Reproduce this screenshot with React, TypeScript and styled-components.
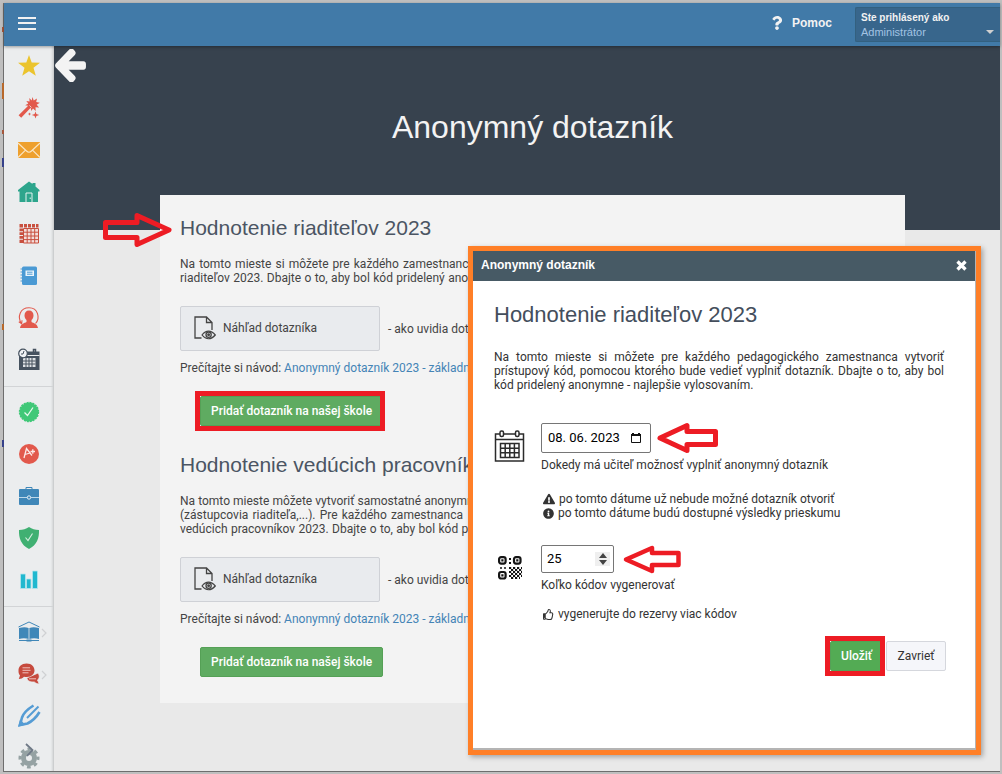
import React from 'react';
import styled, { createGlobalStyle, css } from 'styled-components';
import { FaExclamationTriangle, FaInfoCircle, FaQuestion, FaRegThumbsUp } from 'react-icons/fa';

const GlobalStyle = createGlobalStyle`
  * { box-sizing: border-box; }
  body {
    margin: 0;
    background: #bfbfbf;
    color: #444;
    font: 12px/14px Roboto, sans-serif;
  }
  h1, h2, p { margin: 0; font-weight: 400; }
  button, input { font-family: inherit; }
`;

const Frame = styled.div`
  position: relative;
  min-height: 100vh;
  display: flex;
  padding: 3px 2px 2px 3px;
  overflow: hidden;
`;

const Shell = styled.div`
  flex: 1;
  display: flex;
  flex-direction: column;
  border-left: 1px solid #6e6e6e;
  border-bottom: 1px solid #6e6e6e;
  background: #e9e9e9;
`;

const EdgeMarks = styled.svg`
  position: absolute;
  left: 0;
  top: 0;
`;

const TopBar = styled.header`
  position: relative;
  z-index: 1;
  display: flex;
  align-items: center;
  height: 43px;
  padding: 0 0 4px 14px;
  background: #417aa8;
  box-shadow: 0 1px 3px rgba(0, 0, 0, 0.35);
`;

const IconButton = styled.button`
  display: flex;
  padding: 0;
  border: 0;
  background: none;
  color: inherit;
  cursor: pointer;
`;

const HelpLink = styled.a`
  display: flex;
  align-items: center;
  gap: 8px;
  margin-left: auto;
  margin-right: 23px;
  color: #f2f2f2;
  font: bold 12px/16px 'Liberation Sans', Arial, sans-serif;
  text-decoration: none;
`;

const UserMenu = styled.button`
  display: flex;
  align-self: flex-end;
  align-items: flex-end;
  justify-content: space-between;
  width: 145px;
  height: 35px;
  padding: 2px 6px 2px 5px;
  border: 1px solid #33607f;
  border-right: 0;
  border-radius: 2px 0 0 2px;
  background: #38668c;
  color: #f2f2f2;
  text-align: left;
  cursor: pointer;
`;

const UserText = styled.span`
  display: flex;
  flex-direction: column;
  font: bold 10px/14px 'Liberation Sans', Arial, sans-serif;
`;

const UserName = styled.span`
  color: #a3c3e3;
  font-size: 11px;
  font-weight: 400;
`;

const Body = styled.div`
  flex: 1;
  display: flex;
`;

const Sidebar = styled.nav`
  flex: none;
  width: 50px;
  display: flex;
  flex-direction: column;
  gap: 16px;
  padding-top: 7px;
  background: #ebedee;
  box-shadow: inset -3px 0 3px -2px rgba(0, 0, 0, 0.2);
`;

const SideLink = styled.a`
  position: relative;
  display: flex;
  align-items: center;
  justify-content: center;
  height: 26px;
`;

const SideRule = styled.div`
  height: 1px;
  margin: -3px 1px -4px 0;
  background: #d2d4d6;
`;

const Submenu = styled.svg`
  position: absolute;
  right: 7px;
  top: 9px;
`;

const Main = styled.main`
  flex: 1;
  min-width: 0;
`;

const Hero = styled.div`
  position: relative;
  height: 184px;
  padding: 61px 0 0 11px;
  background: #37424e;
`;

const BackButton = styled(IconButton)`
  position: absolute;
  left: 1px;
  top: 3px;
`;

const HeroTitle = styled.h1`
  color: #f3f3f3;
  font: 32px/40px 'Liberation Sans', Arial, sans-serif;
  text-align: center;
`;

const Center = styled.div`
  display: flex;
  justify-content: center;
  padding-left: 11px;
`;

const Card = styled.section`
  position: relative;
  width: 100%;
  max-width: 745px;
  margin-top: -35px;
  padding: 20px 20px 26px;
  background: #f3f3f3;
`;

const Title = styled.h2<{ $large?: boolean }>`
  position: relative;
  color: ${(p) => (p.$large ? '#444e5c' : '#4b5563')};
  font: ${(p) => (p.$large ? 22 : 21)}px/26px 'Liberation Sans', Arial, sans-serif;
`;

const Survey = styled.div`
  & + & { margin-top: 26px; }
`;

const Intro = styled.p`
  margin-top: 16px;
  text-align: justify;
`;

const Line = styled.span<{ $width: number }>`
  display: block;
  width: ${(p) => p.$width}px;
  text-align-last: justify;
`;

const PreviewRow = styled.div`
  display: flex;
  align-items: center;
  gap: 8px;
  margin: 21px 0 10px;
`;

const PreviewButton = styled.button`
  display: flex;
  align-items: center;
  gap: 7px;
  width: 200px;
  height: 45px;
  padding: 0 13px 2px;
  border: 1px solid #cfd1d6;
  border-radius: 2px;
  background: #e9ebee;
  color: #444;
  font-size: 12px;
  cursor: pointer;
`;

const GuideLink = styled.a`
  color: #4484b6;
  text-decoration: none;
`;

const AddRow = styled.div`
  display: flex;
  margin: 21px 0 0 20px;
`;

const highlight = css`
  &::after {
    content: '';
    position: absolute;
    inset: -6px -3px -6px -6px;
    border: 5px solid #ed1c24;
  }
`;

const Button = styled.button<{ $tone: 'green' | 'plain'; $marked?: boolean }>`
  position: relative;
  height: 30px;
  min-width: ${(p) => (p.$tone === 'green' ? 0 : 60)}px;
  padding: 0 10px;
  border: 1px solid ${(p) => (p.$tone === 'green' ? '#55a056' : '#d5d7dd')};
  border-radius: 2px;
  background: ${(p) => (p.$tone === 'green' ? '#5fab61' : '#f5f6fa')};
  color: ${(p) => (p.$tone === 'green' ? '#fff' : '#333')};
  font-size: 12px;
  font-weight: ${(p) => (p.$tone === 'green' ? 500 : 400)};
  cursor: pointer;
  ${(p) => p.$marked && highlight}
`;

const SaveButton = styled(Button)`
  background: #53ab54;
`;

const Dialog = styled.div`
  position: absolute;
  z-index: 2;
  top: 246px;
  right: 21px;
  width: 513px;
  border: 5px solid #ff7f27;
  background: #b4b4b4;
  padding: 0 1px 2px 0;
  box-shadow: 2px 2px 5px rgba(0, 0, 0, 0.3);
  color: #333;
`;

const DialogHeader = styled.div`
  display: flex;
  align-items: center;
  justify-content: space-between;
  height: 30px;
  padding: 0 8px 2px;
  background: #475a65;
  color: #fff;
  font: bold 12px/14px 'Liberation Sans', Arial, sans-serif;
`;

const DialogBody = styled.div`
  padding: 21px 31px 77px 21px;
  background: #fff;
`;

const DialogIntro = styled(Intro)`
  margin: 22px 0 31px;
`;

const Field = styled.div`
  display: grid;
  grid-template-columns: 32px 1fr;
  column-gap: 15px;
  margin-bottom: 25px;
`;

const FieldIcon = styled.div<{ $low?: boolean }>`
  display: flex;
  justify-content: center;
  align-items: flex-start;
  padding-top: ${(p) => (p.$low ? 10 : 7)}px;
`;

const FieldBox = styled.div<{ $wide?: boolean }>`
  position: relative;
  display: flex;
  align-items: center;
  justify-content: space-between;
  width: ${(p) => (p.$wide ? 110 : 73)}px;
  height: ${(p) => (p.$wide ? 30 : 28)}px;
  padding: 0 ${(p) => (p.$wide ? '9px 0 6px' : '3px 0 5px')};
  margin-bottom: 5px;
  border: 1px solid #767676;
  border-radius: 2px;
  background: #fff;
`;

const TextInput = styled.input`
  flex: 1;
  min-width: 0;
  width: 100%;
  padding: 0;
  border: 0;
  outline: 0;
  background: none;
  color: #000;
  font-size: 13px;
  line-height: 16px;
  appearance: textfield;
  &::-webkit-inner-spin-button { display: none; }
`;

const Spinner = styled.span`
  display: flex;
  align-items: center;
  justify-content: center;
  width: 15px;
  height: 14px;
  background: #efefef;
`;

const FieldLabel = styled.label`
  display: block;
`;

const Hint = styled.p<{ $spaced?: boolean }>`
  display: flex;
  align-items: center;
  gap: 4px;
  padding-left: 2px;
  margin-top: ${(p) => (p.$spaced ? 15 : 0)}px;
  & > svg { flex: none; }
`;

const FirstHint = styled.div`
  margin-top: 20px;
`;

const Actions = styled.div`
  display: flex;
  justify-content: flex-end;
  gap: 3px;
  margin: -5px -2px 0 0;
`;

const TitleArrow = styled.svg`
  position: absolute;
  left: -77px;
  top: -3px;
`;

const FieldArrow = styled.svg`
  position: absolute;
  left: calc(100% + 6px);
  top: -2px;
`;

const PointLeft = () => (
  <FieldArrow width="63" height="32" fill="none" stroke="#ed1c24" strokeWidth="5" strokeLinejoin="round" aria-hidden="true">
    <path d="M4 16 31 3.500V9.500H59.500V22.500H31V28.500Z" />
  </FieldArrow>
);

const PointLeftSmall = () => (
  <FieldArrow width="67" height="32" fill="none" stroke="#ed1c24" strokeWidth="4.500" strokeLinejoin="round" aria-hidden="true">
    <path d="M7 15.500 33 4V9H59.500V21H33V27Z" />
  </FieldArrow>
);

const sideIcons: Record<string, React.ReactNode> = {
  star: <path fill="#ebc42d" d="m11 0 2.700 7.500 8.300.2-6.500 5 2.300 8.100L11 16.200l-6.800 4.600 2.300-8.100-6.500-5 8.300-.2Z" />,
  wand: (
    <g fill="#e2594c">
      <path d="m14.500 0 1.200 3.400L19 1.500 18.200 5l3.600.8-3.100 2 2.400 2.800-3.600-.3.200 3.600-2.700-2.300-1.700 2.500-.6-3.300-9.500 9.900-2.600-2.400 9.600-9.500-3-.6 3.100-1.600-2-2.700 3.300.7-.3-3.500 2.400 2.400Z" />
      <path d="m17.500 14.500.9 2.600 2.800.9-2.800.9-.9 2.700-.9-2.700-2.800-.9 2.800-.9Z" />
      <path d="m11.500 15.500.5 1.100 1.100.5-1.100.5-.5 1.100-.5-1.100-1.100-.5 1.100-.5Z" />
      <path stroke="#ebedee" strokeWidth=".8" d="m11.500 8.500 2 2" />
    </g>
  ),
  mail: (
    <g>
      <path fill="#eea02e" d="M0 3h22v16H0z" />
      <path fill="none" stroke="#fae6c5" strokeWidth="1.100" d="m0 4 8.500 8Q11 14.500 13.500 12L22 4M0 18.500l7.500-7.300M22 18.500l-7.500-7.300" />
    </g>
  ),
  home: (
    <g>
      <path fill="#2da58c" d="M11 .5 14.500 3V2h3v3.500L21.500 9v1.500H20V21H1.500V10.500H0V9Z" />
      <path fill="none" stroke="#e5f3f0" strokeWidth="1" d="M8 21v-9h6v9M12.200 16.500v1.500" />
    </g>
  ),
  table: (
    <g>
      <path fill="#c8503f" d="M1.500 1H5v3.500H1.500zM6 1h3v3.500H6zM10 1h3v3.500h-3zM14 1h3v3.500h-3zM18 1h2.500v3.500H18zM1.500 5.500H5v2.800H1.500zM1.500 9.200H5V12H1.500zM1.500 13H5v2.800H1.500zM1.500 16.700H5V20H1.500z" />
      <path fill="#f3dedb" stroke="#c8503f" strokeWidth="1" d="M5.500 5.500h15v14.500h-15z" />
      <path stroke="#c8503f" strokeWidth="1" d="M9.200 5.500V20M13 5.500V20M16.700 5.500V20M5.500 9.200h15M5.500 13h15M5.500 16.600h15" />
    </g>
  ),
  notebook: (
    <g>
      <rect x="4" y="1.500" width="15" height="18.500" rx="1.500" fill="#4a9ad4" />
      <path stroke="#4a9ad4" strokeWidth="1.200" d="M2.500 4H5M2.500 7H5M2.500 10H5M2.500 13H5M2.500 16H5" />
      <path fill="#eaf4fb" d="M7.500 5.500h8.500v5.500H7.500z" />
      <path stroke="#4a9ad4" strokeWidth="1" d="M9 7.200h5.500M9 9.200h5.500" />
    </g>
  ),
  person: (
    <g>
      <path fill="#e2594c" d="M11 3.500c3 0 4.500 2 4.500 5 0 2-1 3.500-2 4.500v2c2 1 6 2 6.500 6H2c.5-4 4.500-5 6.500-6v-2c-1-1-2-2.500-2-4.500 0-3 1.500-5 4.500-5Z" />
      <path fill="none" stroke="#e2594c" strokeWidth="1.100" d="M3.500 16.500C-1 10 2 .8 11 .8S22.500 11 17.500 16.500M.8 14.800l2.900 2 .3-3.500" />
    </g>
  ),
  schedule: (
    <g>
      <path fill="#46525f" d="M1 2.500h20.500V21H1z" />
      <path stroke="#ebedee" strokeWidth="1" d="M1 6.500h20.500" />
      <path fill="none" stroke="#46525f" strokeWidth="1.500" d="M15.500 3V.5h2V4" />
      <path fill="#dfe2e5" d="M5 9h12.500v9H5z" />
      <path stroke="#46525f" strokeWidth="1" d="M8 9v9M11 9v9M14 9v9M5 12h12.500M5 15h12.500" />
      <circle cx="5" cy="4.500" r="4.300" fill="#f0f2f4" stroke="#46525f" strokeWidth="1.200" />
      <path fill="none" stroke="#46525f" d="M6 2 5 5H3" />
    </g>
  ),
  check: (
    <g>
      <circle cx="11" cy="11" r="9.500" fill="#40c878" stroke="#40c878" strokeWidth="1.400" strokeDasharray="2 1" />
      <path fill="none" stroke="#e8f9ef" strokeWidth="1.300" d="m6.500 11.500 3 3 5.500-8" />
    </g>
  ),
  grade: (
    <g>
      <circle cx="11" cy="11" r="10" fill="#e2594c" />
      <path fill="none" stroke="#fbe9e7" strokeWidth="1.300" d="m6 15 2.500-9.500 5.500 7M7 11.500l5-1.500M12.500 8.500h4.500M14.800 6.300v4.500" />
    </g>
  ),
  briefcase: (
    <g>
      <path fill="none" stroke="#3f87b8" strokeWidth="1" d="M8 4V2.500h6V4" />
      <rect x="1" y="4" width="20" height="16" rx="1" fill="#3f87b8" />
      <path stroke="#bdd8e9" strokeWidth="1" d="M1 12.500h20" />
      <circle cx="11" cy="12.500" r="1.700" fill="#3f87b8" stroke="#e5f0f7" />
    </g>
  ),
  shield: (
    <g>
      <path fill="#40b072" d="M11 0c3 2 6 3 10 3 .3 8-2 15-10 19C3 18 .7 11 1 3c4 0 7-1 10-3Z" />
      <path fill="none" stroke="#d5efe1" strokeWidth="1.100" d="m7.500 10.500 2.500 3 4.500-7" />
    </g>
  ),
  chart: <path fill="#20b8cf" stroke="#b5e4ec" strokeWidth=".8" d="M2.500 5h5v14.500h-5zM8.500 10h4.500v9.500H8.500zM14.500 2h5v17.500h-5z" />,
  book: (
    <g>
      <path fill="none" stroke="#3f87b8" strokeWidth="1" d="M.5 6 11 1l10.500 5M1 19.500h20" />
      <path fill="#3f87b8" d="M1 7c4-1 7-1 9.600 0v11C8 17 4 17 1 18Zm20 0c-4-1-7-1-9.600 0v11c2.600-1 6.600-1 9.600 0Z" />
      <path fill="#3f87b8" d="M8.500 18.500h5V20.500h-5z" />
    </g>
  ),
  chat: (
    <g>
      <path fill="#c64a3d" stroke="#ebedee" strokeWidth=".8" d="M20 10c2 2.500 1.500 5.500-.5 7l1.800 4c-2.500-.2-4-1-5-2-3.500.3-7-.8-7.500-4Z" />
      <path fill="#c64a3d" d="M8.500.5C14 .5 16.500 4 16.500 7.500S13.500 14 9 14c-1 0-2 0-3-.2C4.500 15.500 3 16 .8 16L2 12.500C.5 11 .5 9 .5 7.500c0-4 3-7 8-7Z" />
      <path fill="none" stroke="#efc1bc" strokeWidth="1" d="M4.500 4.800H12M4.500 7.300h8M4.500 9.800h6M11 15.800h7" />
    </g>
  ),
  pencil: (
    <g>
      <path fill="none" stroke="#559cd4" strokeWidth="2.600" d="M15.500.5C9 4.500 5.500 8 4 12.500L2 20l7.500-1.500C14.500 16 18.500 12 21.500 7" />
      <path fill="#559cd4" d="M0 21.800 2 14.500l5.500 5.300Z" />
      <path stroke="#559cd4" strokeWidth="2" d="M9 13 20.500 1.500" />
    </g>
  ),
  gear: (
    <g>
      <circle cx="11" cy="11" r="5.500" fill="none" stroke="#95a2a3" strokeWidth="5" />
      <circle cx="11" cy="11" r="9" fill="none" stroke="#95a2a3" strokeWidth="3" strokeDasharray="3.700 3.370" strokeDashoffset="1.800" />
      <path fill="none" stroke="#6f7987" strokeWidth="1.800" d="M8-3l6.500 6L9 9" />
    </g>
  ),
};

const sideGroups: { icon: string; label: string; sub?: boolean }[][] = [
  [
    { icon: 'star', label: 'Obľúbené' },
    { icon: 'wand', label: 'Sprievodca' },
    { icon: 'mail', label: 'Správy' },
    { icon: 'home', label: 'Domov' },
    { icon: 'table', label: 'Rozvrh' },
    { icon: 'notebook', label: 'Triedna kniha' },
    { icon: 'person', label: 'Zastupovanie' },
    { icon: 'schedule', label: 'Plán' },
  ],
  [
    { icon: 'check', label: 'Dochádzka' },
    { icon: 'grade', label: 'Známky' },
    { icon: 'briefcase', label: 'Agenda' },
    { icon: 'shield', label: 'Bezpečnosť' },
    { icon: 'chart', label: 'Výsledky' },
  ],
  [
    { icon: 'book', label: 'Vyučovanie', sub: true },
    { icon: 'chat', label: 'Komunikácia', sub: true },
    { icon: 'pencil', label: 'Úpravy' },
    { icon: 'gear', label: 'Nastavenia' },
  ],
];

const PreviewIcon = () => (
  <svg width="22" height="24" viewBox="0 0 22 24" fill="none" stroke="#444" strokeWidth="1.300" aria-hidden="true">
    <path d="M7.500 22H1V1h11.500L18 6.500V14M12.500 1v5.500H18" />
    <path fill="#e9ebee" strokeWidth="1.200" d="M8 19c4-5.300 9-5.300 13.300 0-4.300 5-9.300 5-13.300 0Z" />
    <circle cx="14.600" cy="18.800" r="2.600" />
    <circle cx="14.600" cy="18.800" r=".8" fill="#444" />
  </svg>
);

const CalendarIcon = () => (
  <svg width="32" height="32" viewBox="0 0 32 32" fill="none" stroke="#2b2b2b" strokeWidth="1.500" aria-hidden="true">
    <path d="M6 4H1.500v27h28V4H25M10 4h11M1.500 9.500h28" />
    <rect x="6" y="1" width="3.500" height="5.500" rx="1.500" />
    <rect x="21.500" y="1" width="3.500" height="5.500" rx="1.500" />
    <path d="M6.500 13.500h18.500v14H6.500zM11.200 13.500v14M15.800 13.500v14M20.400 13.500v14M6.500 18.200h18.500M6.500 22.800h18.500" />
  </svg>
);

const QrIcon = () => (
  <svg width="26" height="26" viewBox="0 0 26 26" aria-hidden="true">
    <g fill="none" stroke="#151515" strokeWidth="2.200">
      <rect x="2.100" y="2.100" width="6.500" height="6.500" rx="2" />
      <rect x="17" y="2.100" width="6.500" height="6.500" rx="2" />
      <rect x="2.100" y="17" width="6.500" height="6.500" rx="2" />
    </g>
    <path fill="#151515" d="M4.300 4.300h2.200v2.200H4.300zM19.200 4.300h2.200v2.200h-2.200zM4.300 19.200h2.200v2.200H4.300zM12 3h2v2h-2zm0 4h2v2h-2zM3 12.200h2v1.600H3zm4 0h2v1.600H7z" />
    <path stroke="#151515" strokeWidth="1.800" strokeDasharray="2.200 1.800" d="M12 13h13M14 15h11M12 17h13M14 19h11M12 21h13M14 23h9" />
  </svg>
);

function SurveyBlock({ title, children, marked }: { title: string; children: React.ReactNode; marked?: boolean }) {
  return (
    <Survey>
      <Title>
        {title}
        {marked && (
          <TitleArrow width="70" height="36" fill="none" stroke="#ed1c24" strokeWidth="5" strokeLinejoin="round" aria-hidden="true">
            <path d="M2.500 10.500H34V3.500L66 18 34 32.500V25.500H2.500Z" />
          </TitleArrow>
        )}
      </Title>
      <Intro>{children}</Intro>
      <PreviewRow>
        <PreviewButton type="button">
          <PreviewIcon />
          Náhľad dotazníka
        </PreviewButton>
        <span>- ako uvidia dotazník</span>
      </PreviewRow>
      <p>
        Prečítajte si návod: <GuideLink href="#navod">Anonymný dotazník 2023 - základné</GuideLink>
      </p>
      <AddRow>
        <Button type="button" $tone="green" $marked={marked}>Pridať dotazník na našej škole</Button>
      </AddRow>
    </Survey>
  );
}

export default function App() {
  return (
    <Frame>
      <GlobalStyle />
      <EdgeMarks width="4" height="480" aria-hidden="true">
        <path fill="#a5583c" d="M2 27h2v5H2zM2 130h2v4H2z" />
        <path fill="#b8692b" d="M2 83h2v16H2zM2 324h2v6H2z" />
        <path fill="#35418a" d="M2 158h2v9H2zM2 440h2v7H2z" />
      </EdgeMarks>
      <Shell>
        <TopBar>
          <IconButton type="button" aria-label="Menu">
            <svg width="18" height="14" aria-hidden="true">
              <path stroke="#f2f2f2" strokeWidth="2" d="M0 2h18M0 7h18M0 13h18" />
            </svg>
          </IconButton>
          <HelpLink href="#pomoc">
            <FaQuestion size={14} />
            Pomoc
          </HelpLink>
          <UserMenu type="button">
            <UserText>
              Ste prihlásený ako
              <UserName>Administrátor</UserName>
            </UserText>
            <svg width="8" height="9" aria-hidden="true">
              <path fill="#d0d0d0" d="M0 0h8L4 4z" />
            </svg>
          </UserMenu>
        </TopBar>
        <Body>
          <Sidebar>
            {sideGroups.map((group, i) => (
              <React.Fragment key={i}>
                {i > 0 && <SideRule />}
                {group.map((item) => (
                  <SideLink key={item.icon} href={`#${item.icon}`} aria-label={item.label}>
                    <svg width="22" height="22" viewBox="0 0 22 22" overflow="visible" aria-hidden="true">
                      {sideIcons[item.icon]}
                    </svg>
                    {item.sub && (
                      <Submenu width="6" height="10" fill="none" stroke="#cfd1d3" strokeWidth="1.200" aria-hidden="true">
                        <path d="m1 1 4 4-4 4" />
                      </Submenu>
                    )}
                  </SideLink>
                ))}
              </React.Fragment>
            ))}
          </Sidebar>
          <Main>
            <Hero>
              <BackButton type="button" aria-label="Späť">
                <svg width="31" height="33" viewBox="190 205 1476 1510" preserveAspectRatio="none" aria-hidden="true">
                  <path fill="#f3f3f3" d="M1664 896v128q0 53-32.500 90.500t-84.500 37.500h-704l293 294q38 36 38 90t-38 90l-75 76q-37 37-90 37-52 0-91-37l-651-652q-37-37-37-90 0-52 37-91l651-650q38-38 91-38 52 0 90 38l75 74q38 38 38 91t-38 91l-293 293h704q52 0 84.500 37.500t32.500 90.500z" />
                </svg>
              </BackButton>
              <HeroTitle>Anonymný dotazník</HeroTitle>
            </Hero>
            <Center>
              <Card>
                <SurveyBlock title="Hodnotenie riaditeľov 2023" marked>
                  <Line $width={295}>Na tomto mieste si môžete pre každého zamestnanca</Line>
                  <Line $width={324}>riaditeľov 2023. Dbajte o to, aby bol kód pridelený anonymne</Line>
                </SurveyBlock>
                <SurveyBlock title="Hodnotenie vedúcich pracovníkov">
                  <Line $width={300}>Na tomto mieste môžete vytvoriť samostatné anonymné</Line>
                  <Line $width={283}>(zástupcovia riaditeľa,...). Pre každého zamestnanca</Line>
                  <Line $width={330}>vedúcich pracovníkov 2023. Dbajte o to, aby bol kód pridelený</Line>
                </SurveyBlock>
              </Card>
            </Center>
          </Main>
        </Body>
      </Shell>
      <Dialog role="dialog" aria-label="Anonymný dotazník">
        <DialogHeader>
          Anonymný dotazník
          <IconButton type="button" aria-label="Zatvoriť">
            <svg width="11" height="11" aria-hidden="true">
              <path stroke="#fff" strokeWidth="3.300" d="m1.500 1.500 8 8M9.500 1.500l-8 8" />
            </svg>
          </IconButton>
        </DialogHeader>
        <DialogBody>
          <Title $large>Hodnotenie riaditeľov 2023</Title>
          <DialogIntro>
            Na tomto mieste si môžete pre každého pedagogického zamestnanca vytvoriť prístupový kód, pomocou ktorého bude vedieť vyplniť dotazník. Dbajte o to, aby bol kód pridelený anonymne - najlepšie vylosovaním.
          </DialogIntro>
          <Field>
            <FieldIcon><CalendarIcon /></FieldIcon>
            <div>
              <FieldBox $wide>
                <TextInput id="deadline" type="text" defaultValue="08. 06. 2023" />
                <svg width="10" height="10" aria-hidden="true">
                  <path fill="none" stroke="#111" d="M.5 2h9v7.500h-9z" />
                  <path fill="#111" d="M0 1h10v2H0zM1 0h2v1H1zM7 0h2v1H7z" />
                </svg>
                <PointLeft />
              </FieldBox>
              <FieldLabel htmlFor="deadline">Dokedy má učiteľ možnosť vyplniť anonymný dotazník</FieldLabel>
              <FirstHint>
                <Hint><FaExclamationTriangle size={12} />po tomto dátume už nebude možné dotazník otvoriť</Hint>
                <Hint><FaInfoCircle size={11} />po tomto dátume budú dostupné výsledky prieskumu</Hint>
              </FirstHint>
            </div>
          </Field>
          <Field>
            <FieldIcon $low><QrIcon /></FieldIcon>
            <div>
              <FieldBox>
                <TextInput id="codes" type="number" defaultValue="25" />
                <Spinner>
                  <svg width="8" height="12" aria-hidden="true">
                    <path fill="#444" d="M0 5h8L4 0zM0 7h8l-4 5z" />
                  </svg>
                </Spinner>
                <PointLeftSmall />
              </FieldBox>
              <FieldLabel htmlFor="codes">Koľko kódov vygenerovať</FieldLabel>
              <Hint $spaced><FaRegThumbsUp size={11} />vygenerujte do rezervy viac kódov</Hint>
            </div>
          </Field>
          <Actions>
            <SaveButton type="button" $tone="green" $marked>Uložiť</SaveButton>
            <Button type="button" $tone="plain">Zavrieť</Button>
          </Actions>
        </DialogBody>
      </Dialog>
    </Frame>
  );
}
